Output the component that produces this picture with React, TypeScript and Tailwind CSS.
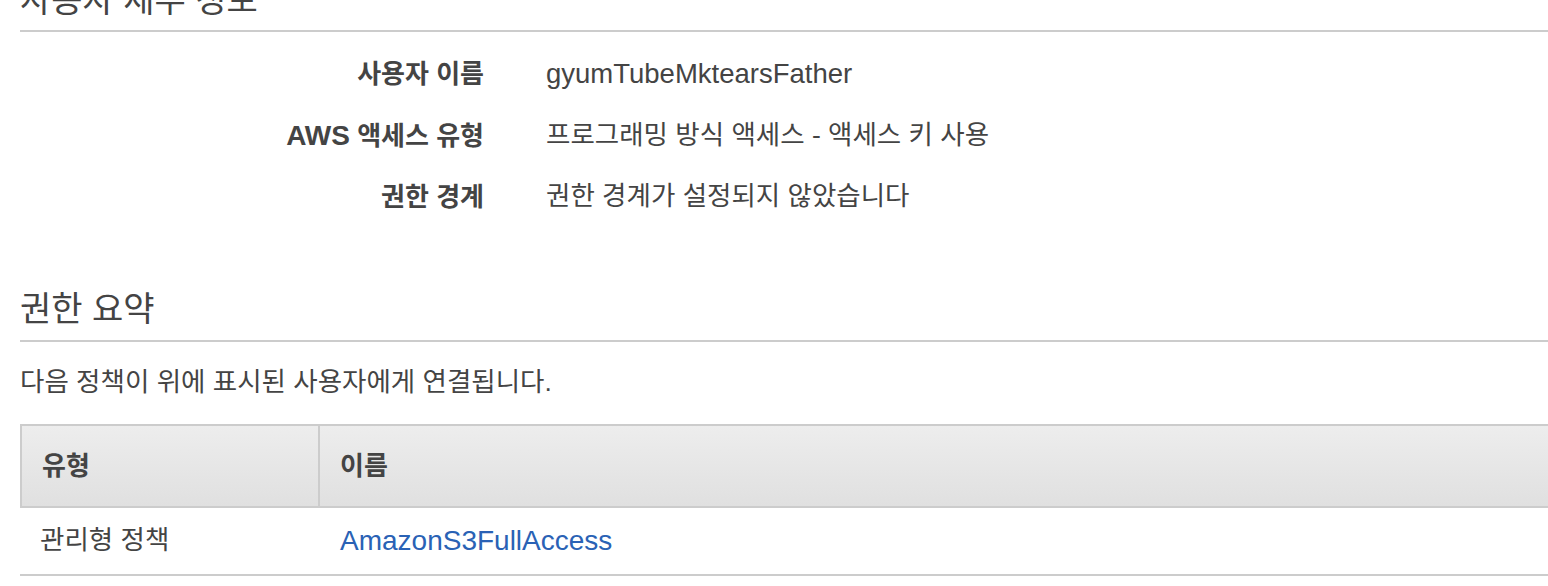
export default function App() {
  const rows = [
    { label: <>사용자 이름</>, value: <span className="text-[27.5px]">gyumTubeMktearsFather</span> },
    {
      label: (
        <>
          <span className="text-[28px]">AWS</span> 액세스 유형
        </>
      ),
      value: <>프로그래밍 방식 액세스 - 액세스 키 사용</>,
    },
    { label: <>권한 경계</>, value: <>권한 경계가 설정되지 않았습니다</> },
  ]

  return (
    <div className="h-[586px] w-full overflow-hidden bg-white pl-5 text-[#444] font-['Liberation_Sans','Noto_Sans_CJK_KR',sans-serif]">
      {/* 사용자 세부 정보 */}
      <h2 className="-mt-[20px] border-b-2 border-[#cccccc] pb-[10px] text-[34px] font-normal leading-[40px]">
        사용자 세부 정보
      </h2>

      <div className="pt-[11.5px]">
        {rows.map((r, i) => (
          <div key={i} className="flex h-[61.5px] items-center">
            <div className="w-[464px] text-right text-[26px] font-bold">{r.label}</div>
            <div className="ml-[62px] text-[26.5px]">{r.value}</div>
          </div>
        ))}
      </div>

      {/* 권한 요약 */}
      <h2 className="mt-[61px] border-b-2 border-[#cccccc] pb-[11px] text-[34px] font-normal leading-[40px]">
        권한 요약
      </h2>
      <p className="mt-[25px] text-[26.5px] leading-[30px]">다음 정책이 위에 표시된 사용자에게 연결됩니다.</p>

      <div className="mt-[27px]">
        <div className="flex h-[84px] border-y-2 border-l-2 border-[#cccccc] bg-linear-to-b from-[#ededed] to-[#e0e0e0] text-[26px] font-bold">
          <div className="flex w-[298px] items-center border-r-2 border-[#cccccc] pl-5">유형</div>
          <div className="flex flex-1 items-center pl-5">이름</div>
        </div>
        <div className="flex h-[68px] items-center border-b-2 border-[#cccccc]">
          <div className="w-[300px] pl-5 text-[26.5px]">관리형 정책</div>
          <a className="pl-5 text-[28px] text-[#2a62b5]">AmazonS3FullAccess</a>
        </div>
      </div>
    </div>
  )
}
